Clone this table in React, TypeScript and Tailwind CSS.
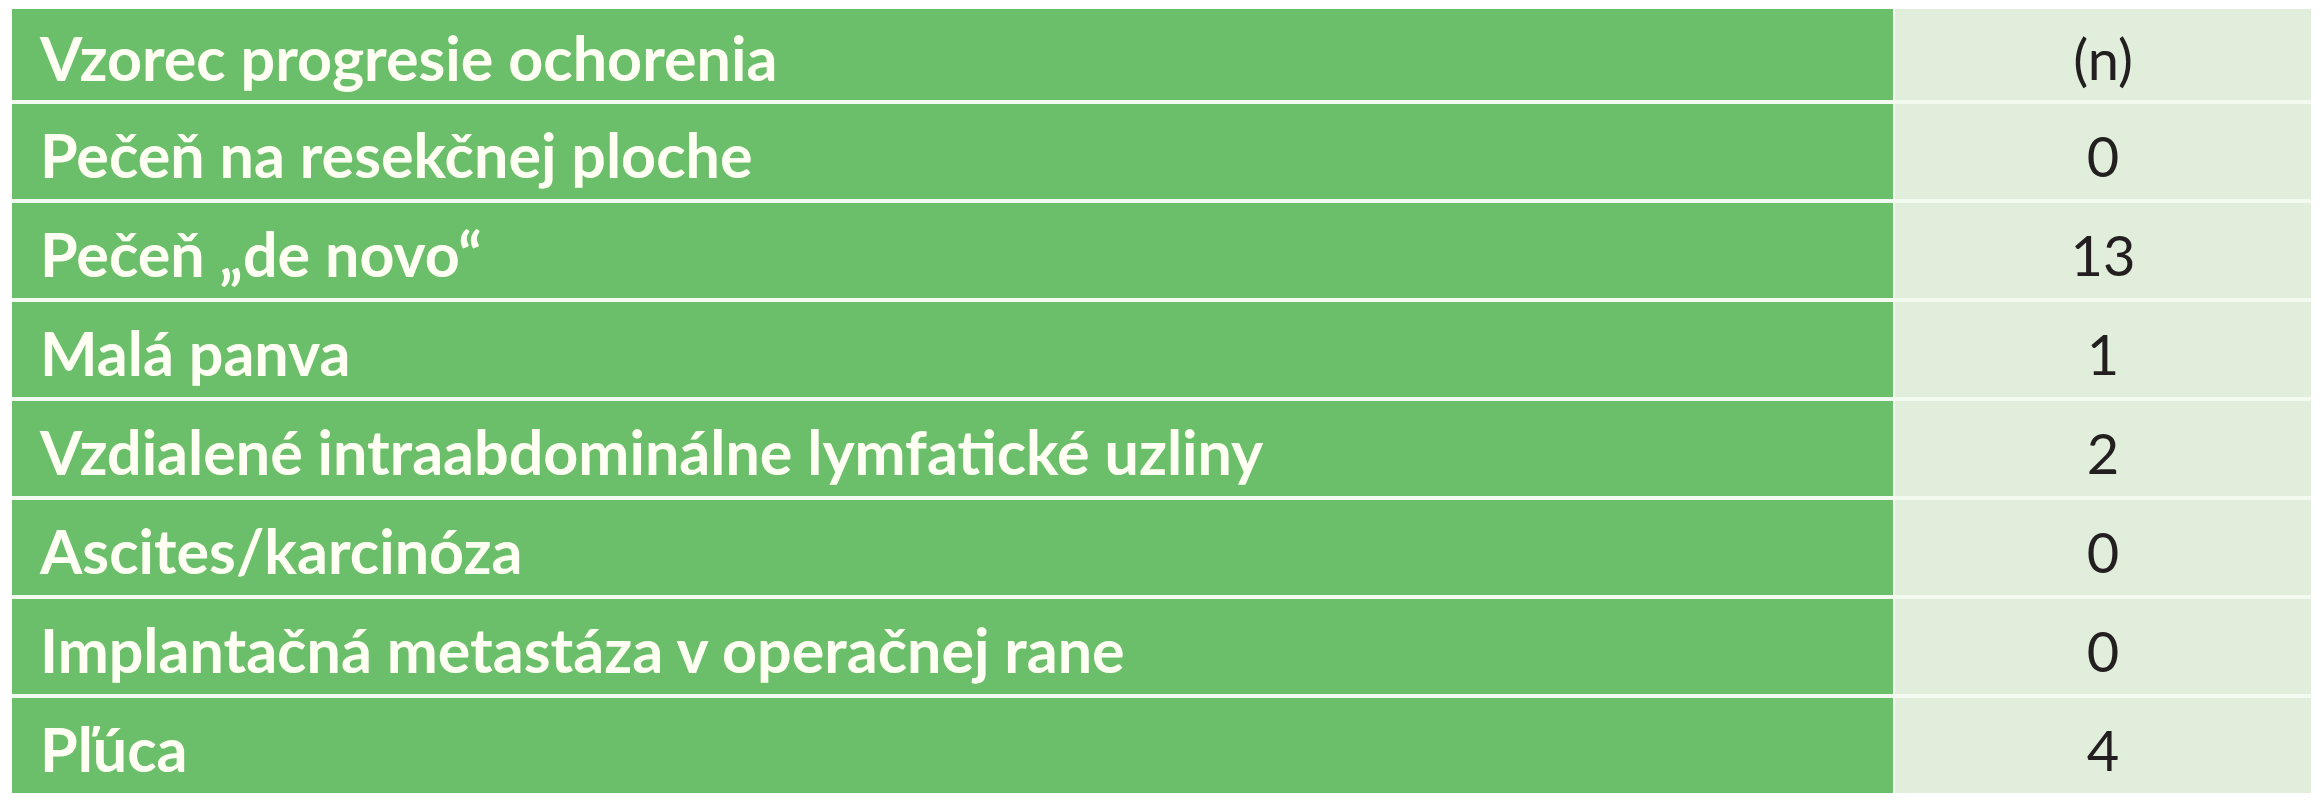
const rows = [
  { label: "Vzorec progresie ochorenia", n: "(n)" },
  { label: "Pečeň na resekčnej ploche", n: "0" },
  { label: "Pečeň „de novo“", n: "13" },
  { label: "Malá panva", n: "1" },
  { label: "Vzdialené intraabdominálne lymfatické uzliny", n: "2" },
  { label: "Ascites/karcinóza", n: "0" },
  { label: "Implantačná metastáza v operačnej rane", n: "0" },
  { label: "Pľúca", n: "4" },
];

export default function App() {
  return (
    <div className="w-[2324px] h-[800px] bg-white pt-[9px] pl-[12px]">
      <div className="w-[2299px] flex flex-col gap-[4px] bg-[#f3faef]">
        {rows.map((r, i) => (
          <div
            key={i}
            className={`flex gap-[2px] ${i === 0 ? "h-[91px]" : "h-[95px]"}`}
          >
            <div className="w-[1881px] flex items-center pl-[28px] pt-[6px] bg-[#6cbf6a]">
              <span className="font-['Lato',sans-serif] font-bold text-[61px] text-[#fffff4] leading-none">
                {r.label}
              </span>
            </div>
            <div className="flex-1 flex items-center justify-center pt-[8px] bg-[#e2eedc]">
              <span className="font-['Lato',sans-serif] font-normal text-[56px] text-[#231f20] leading-none">
                {r.n}
              </span>
            </div>
          </div>
        ))}
      </div>
    </div>
  );
}
